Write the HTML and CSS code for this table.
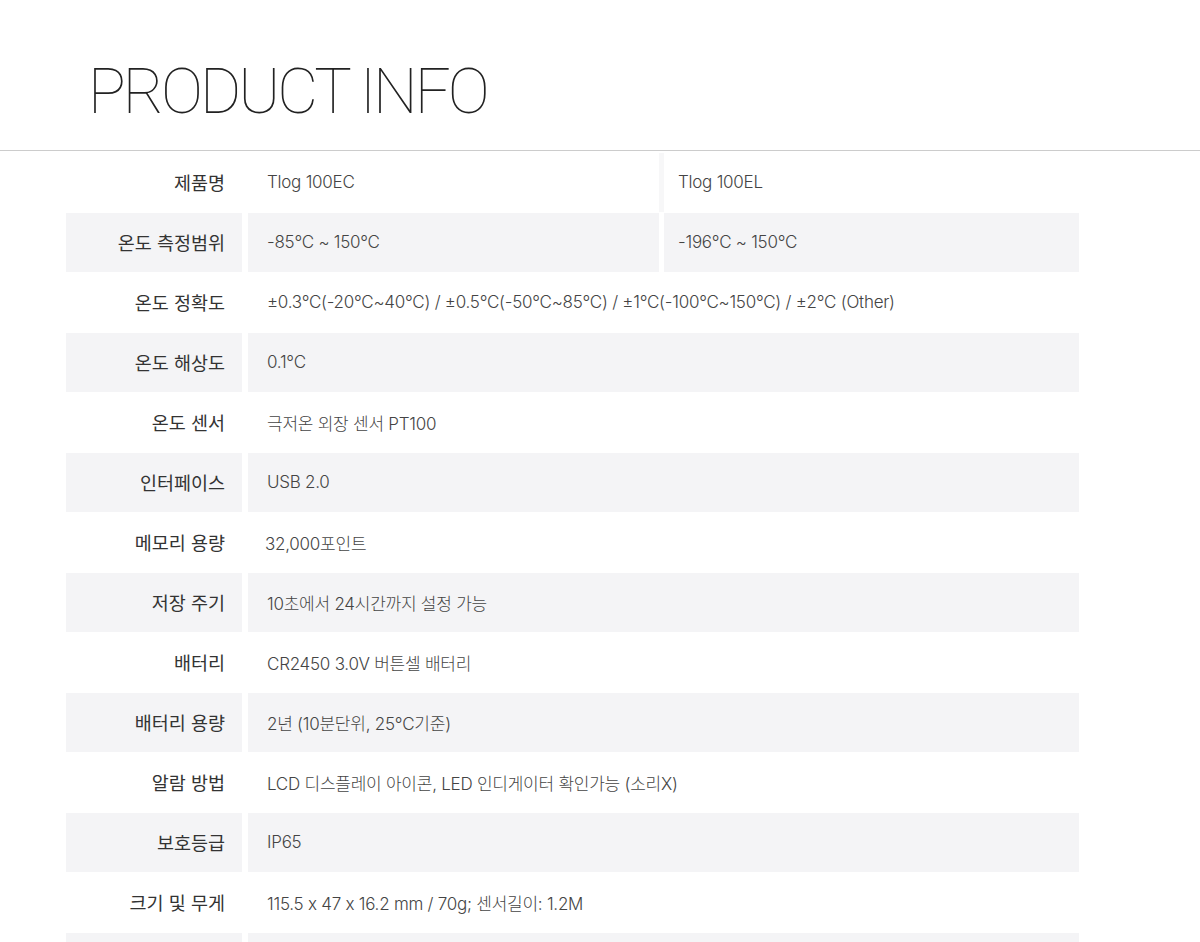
FILE: index.html
```html
<!DOCTYPE html>
<html lang="ko">
  <head>
    <meta charset="utf-8">
    <meta name="viewport" content="width=device-width, initial-scale=1">
    <title>Product Info</title>
    <link rel="stylesheet" href="styles.css">
  </head>
  <body>
    <div class='info-head'>
        <h2 class='info-title'>PRODUCT INFO</h2>
    </div>
    <div class='spec'>
        <div class='row'>
            <div class='label'>제품명</div>
            <div class='split'>
                <div class='value'>Tlog 100EC</div>
                <div class='value'>Tlog 100EL</div>
            </div>
        </div>
        <div class='row alt'>
            <div class='label'>온도 측정범위</div>
            <div class='split'>
                <div class='value'>-85°C ~ 150°C</div>
                <div class='value'>-196°C ~ 150°C</div>
            </div>
        </div>
        <div class='row'>
            <div class='label'>온도 정확도</div>
            <div class='value'>±0.3°C(-20°C~40°C) / ±0.5°C(-50°C~85°C) / ±1°C(-100°C~150°C) / ±2°C (Other)</div>
        </div>
        <div class='row alt'>
            <div class='label'>온도 해상도</div>
            <div class='value'>0.1°C</div>
        </div>
        <div class='row'>
            <div class='label'>온도 센서</div>
            <div class='value'>극저온 외장 센서 PT100</div>
        </div>
        <div class='row alt'>
            <div class='label'>인터페이스</div>
            <div class='value'>USB 2.0</div>
        </div>
        <div class='row'>
            <div class='label'>메모리 용량</div>
            <div class='value shift'>32,000포인트</div>
        </div>
        <div class='row alt'>
            <div class='label'>저장 주기</div>
            <div class='value'>10초에서 24시간까지 설정 가능</div>
        </div>
        <div class='row'>
            <div class='label'>배터리</div>
            <div class='value'>CR2450 3.0V 버튼셀 배터리</div>
        </div>
        <div class='row alt'>
            <div class='label'>배터리 용량</div>
            <div class='value'>2년 (10분단위, 25°C기준)</div>
        </div>
        <div class='row'>
            <div class='label'>알람 방법</div>
            <div class='value'>LCD 디스플레이 아이콘, LED 인디게이터 확인가능 (소리X)</div>
        </div>
        <div class='row alt'>
            <div class='label'>보호등급</div>
            <div class='value'>IP65</div>
        </div>
        <div class='row'>
            <div class='label'>크기 및 무게</div>
            <div class='value'>115.5 x 47 x 16.2 mm / 70g; 센서길이: 1.2M</div>
        </div>
        <div class='row alt'>
            <div class='label'></div>
            <div class='value'></div>
        </div>
    </div>
  </body>
</html>
```

FILE: styles.css
```css
body {
    margin: 0;
    background-color: #FFFFFF;
    font-family: Inter, "Noto Sans CJK KR", sans-serif;
    font-feature-settings: "calt" 0;
}
.info-head {
    padding: 61px 0 27px 88px;
    border-bottom: 1px solid #CCCCCC;
}
.info-title {
    margin: 0;
    font-family: Roboto, sans-serif;
    font-size: 63px;
    line-height: 62px;
    font-weight: 100;
    letter-spacing: -3px;
    color: #222222;
}
.spec {
    width: 1013px;
    margin: 2px 0 0 66px;
}
.row {
    display: grid;
    grid-template-columns: 176px 1fr;
    column-gap: 6px;
    height: 59px;
    margin-bottom: 1px;
}
.label {
    display: flex;
    align-items: center;
    justify-content: flex-end;
    padding-right: 17px;
    padding-bottom: 1px;
    font-size: 18.5px;
    font-weight: 400;
    color: #333333;
}
.value {
    display: flex;
    align-items: center;
    padding-left: 19px;
    padding-bottom: 1px;
    font-size: 17px;
    font-weight: 300;
    letter-spacing: -0.25px;
    color: #444444;
}
.value.shift {
    padding-left: 17px;
}
.split {
    display: grid;
    grid-template-columns: 411px 415px;
    column-gap: 5px;
}
.split .value + .value {
    padding-left: 14px;
}
.row:first-child .split {
    background-color: #F7F7F8;
}
.row:first-child .value {
    background-color: #FFFFFF;
}
.alt .label,
.alt .value {
    background-color: #F4F4F6;
}
```
